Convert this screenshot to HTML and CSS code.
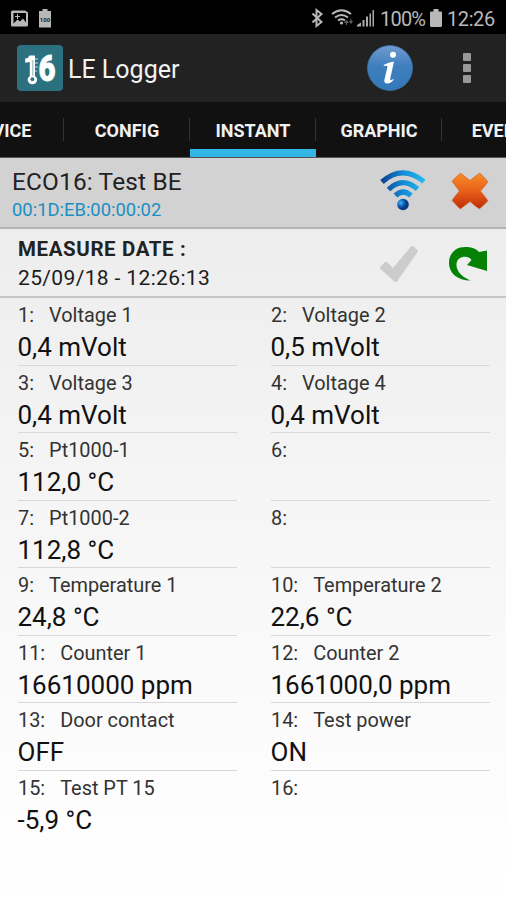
FILE: index.html
```html
<!DOCTYPE html>
<html lang="en">
<head>
<meta charset="utf-8">
<title>LE Logger</title>
<link rel="stylesheet" href="styles.css">
</head>
<body>
<div class="status">
  <svg class="status-left" width="44" height="34" viewBox="0 0 44 34">
    <path fill="#b8b8b8" fill-rule="evenodd" d="M1.500 10.500H14l3 2V25q0 1.500-1.500 1.500H1.500Q0 26.500 0 25V12q0-1.500 1.500-1.500zM2.500 13v10.500l4-4 2.500 2 3-3 3 4V13z"/>
    <path fill="#b8b8b8" d="M4 16h2v-2h1v2h2v1H7v2H6v-2H4zM31.500 9h5v2H40v16.500H28V11h3.500z"/>
    <text class="tiny" x="34" y="21.500" text-anchor="middle">100</text>
  </svg>
  <div class="status-right">
    <svg width="64" height="34" viewBox="0 0 64 34">
      <path fill="none" stroke="#b8b8b8" stroke-width="2" d="M1.500 13.500l9 8.500-5 4V10l5 4-9 8.500"/>
      <g fill="none" stroke="#b8b8b8" stroke-width="2"><path d="M21 14q9.500-7.500 19 0M24 17.500q6.500-5 13 0M27 20.500q3.500-2.500 7 0"/></g>
      <circle cx="30.500" cy="23" r="1.600" fill="#b8b8b8"/>
      <path fill="#666" d="M33 23l2.500-3 2.500 3h-2v2h-1v-2zM38 21h1.500v-2h1v2H42l-2 3z"/>
      <path fill="#aaa" d="M46 26.500v-1.500l4-2.500v4zM51.500 20h2v6.500h-2zM55 16.500h2v10h-2zM58.500 13.500h1.500v13h-1.500zM61.500 10H63v16.500h-1.500z"/>
    </svg>
    <span class="pct">100%</span>
    <svg class="batt" width="12" height="34" viewBox="0 0 12 34"><path fill="#b8b8b8" d="M3.500 9h5v2.500H11q1 0 1 1V25.500q0 1.500-1.500 1.500h-9Q0 27 0 25.500v-13q0-1 1-1h2.500z"/></svg>
    <span class="clock">12:26</span>
  </div>
</div>
<header class="bar">
  <svg class="logo" width="46" height="46" viewBox="0 0 46 46">
    <rect width="46" height="46" rx="4" fill="#2b7180"/>
    <path fill="#fff" d="M12.500 10.500H18v20.500q2.200 1.500 2.200 3.500a4.800 4.800 0 0 1-9.600 0q0-2 2.200-3.500V17l-4.600.8v-4.300q3.500-.5 4.300-3z"/>
    <path fill="none" stroke="#8db6be" stroke-width="1" d="M15.800 15v16"/><circle cx="15.400" cy="34.200" r="1.900" fill="#2b7180"/>
    <path stroke="#cce0e3" stroke-width="1" d="M18 14h3M18 18h3M18 22h3M18 26h2"/>
    <text class="six" x="30" y="36" text-anchor="middle" textLength="17" lengthAdjust="spacingAndGlyphs">6</text>
  </svg>
  <h1>LE Logger</h1>
  <svg class="info" width="46" height="46" viewBox="0 0 46 46">
    <defs><linearGradient id="blue" x2="0" y2="1"><stop stop-color="#729bd0"/><stop offset=".45" stop-color="#3f7fbd"/><stop offset="1" stop-color="#3378ba"/></linearGradient></defs>
    <circle cx="23" cy="23" r="22.500" fill="url(#blue)" stroke="#3975aa" stroke-width=".7"/>
    <circle cx="26" cy="9.800" r="3" fill="#fff"/>
    <path fill="#fff" d="M16.500 20q5-3 10.500-3.500l-3.700 16.700q-.5 2.500 1 1.800l3-1.300q-3 4.800-7 4.800-3.800 0-2.800-4.300l3-12.500q.4-1.700-3.500-.7z"/>
  </svg>
  <div class="more"><i></i><i></i><i></i></div>
</header>
<nav class="tabs">
  <span class="tab">DEVICE</span><span class="tab">CONFIG</span><span class="tab active">INSTANT</span><span class="tab">GRAPHIC</span><span class="tab">EVENTS</span>
</nav>
<section class="device">
  <div class="grow">
    <div class="name">ECO16: Test BE</div>
    <div class="mac">00:1D:EB:00:00:02</div>
  </div>
  <svg class="wifi" width="46" height="42" viewBox="0 0 46 42">
    <defs><linearGradient id="wave" gradientUnits="userSpaceOnUse" x1="1" y1="0" x2="45" y2="0"><stop stop-color="#0b3f91"/><stop offset=".5" stop-color="#138bd5"/><stop offset="1" stop-color="#27bdf3"/></linearGradient>
    <radialGradient id="dot" cx=".3" cy=".35"><stop stop-color="#46b6f1"/><stop offset=".6" stop-color="#0d65b7"/><stop offset="1" stop-color="#093b83"/></radialGradient></defs>
    <g fill="none" stroke="url(#wave)" stroke-width="5.200"><path d="M2 13Q22 -5 44 12.500"/><path d="M8.500 20.500Q22.500 7 37.500 20"/><path d="M15.500 26.500Q23 19.500 31 26.500"/></g>
    <circle cx="23" cy="35.500" r="5.800" fill="url(#dot)"/>
  </svg>
  <svg class="cross" width="38" height="38" viewBox="0 0 38 38">
    <defs><linearGradient id="fire" x2="0" y2="1"><stop stop-color="#f78d25"/><stop offset=".5" stop-color="#e96019"/><stop offset="1" stop-color="#bd2b08"/></linearGradient></defs>
    <path fill="url(#fire)" stroke="#cf6330" stroke-width=".8" stroke-linejoin="round" d="M9.500 1.200l9.500 7.300 9.500-7.300q1 0 8.300 8.300 0 1-7.300 9.500l7.300 9.500q0 1-8.300 8.300-1 0-9.500-7.300l-9.500 7.300q-1 0-8.300-8.300 0-1 7.300-9.500l-7.300-9.500q0-1 8.300-8.300z"/>
  </svg>
</section>
<section class="measure">
  <div class="grow">
    <div class="mtitle">MEASURE DATE :</div>
    <div class="date">25/09/18 - 12:26:13</div>
  </div>
  <svg class="check" width="40" height="38" viewBox="0 0 40 38"><path fill="#ccc" d="M1 22l5-5q1-.5 2 0l6 6L32.500 1q1-.5 2 .5l4 3.500q.8 1 0 2L18 36.500q-1 1.500-2.500 0L1 23.500z"/></svg>
  <svg class="redo" width="40" height="36" viewBox="0 0 40 36"><path fill="#058205" d="M23 34.500C9 34.500 1 27 1 17 1 7 8 1 17 1c7 0 11 1.500 14 5l8-1.500V25l-20-6 4.500-5C20 8.500 9 10 8.500 18c-.5 8 7 14 14.500 16.500z"/></svg>
</section>
<main class="grid">
  <div class="cell"><p>1:<b>Voltage 1</b></p><strong>0,4 mVolt</strong></div>
  <div class="cell"><p>2:<b>Voltage 2</b></p><strong>0,5 mVolt</strong></div>
  <div class="cell"><p>3:<b>Voltage 3</b></p><strong>0,4 mVolt</strong></div>
  <div class="cell"><p>4:<b>Voltage 4</b></p><strong>0,4 mVolt</strong></div>
  <div class="cell"><p>5:<b>Pt1000-1</b></p><strong>112,0 °C</strong></div>
  <div class="cell"><p>6:</p></div>
  <div class="cell"><p>7:<b>Pt1000-2</b></p><strong>112,8 °C</strong></div>
  <div class="cell"><p>8:</p></div>
  <div class="cell"><p>9:<b>Temperature 1</b></p><strong>24,8 °C</strong></div>
  <div class="cell"><p>10:<b>Temperature 2</b></p><strong>22,6 °C</strong></div>
  <div class="cell"><p>11:<b>Counter 1</b></p><strong>16610000 ppm</strong></div>
  <div class="cell"><p>12:<b>Counter 2</b></p><strong>1661000,0 ppm</strong></div>
  <div class="cell"><p>13:<b>Door contact</b></p><strong>OFF</strong></div>
  <div class="cell"><p>14:<b>Test power</b></p><strong>ON</strong></div>
  <div class="cell"><p>15:<b>Test PT 15</b></p><strong>-5,9 °C</strong></div>
  <div class="cell"><p>16:</p></div>
</main>
</body>
</html>
```
FILE: styles.css
```css
* { box-sizing: border-box; margin: 0; padding: 0; }
html { overflow: hidden; }
body {
  width: 506px; height: 900px; overflow: hidden;
  font-family: Roboto, "Liberation Sans", sans-serif; color: #1c1c1c;
  background: linear-gradient(#ededed 230px, #f6f6f6 520px, #fdfdfd 800px, #fff);
}
svg { display: block; flex: none; }
.status { height: 34px; background: #000; display: flex; justify-content: space-between; padding: 0 12px 0 11px; }
.tiny { font: bold 6px Roboto, sans-serif; fill: #222; }
.status-right { display: flex; color: #b8b8b8; font-size: 20px; line-height: 38px; }
.pct { margin-left: 5px; width: 44px; letter-spacing: -0.8px; white-space: nowrap; }
.batt { margin: 0 5px 0 6px; }
.clock { width: 47px; letter-spacing: -0.400px; }
.bar { height: 68px; background: #222; display: flex; align-items: center; padding: 0 35px 0 17px; }
.six { font: 900 36px Roboto, sans-serif; fill: #fff; stroke: #fff; stroke-width: 0.8px; }
h1 { font-size: 25px; font-weight: 400; color: #f2f2f2; margin-left: 5px; flex: 1; line-height: 34px; padding-top: 3px; }
.more { display: flex; flex-direction: column; gap: 3px; margin-left: 50px; }
.more i { width: 8px; height: 8px; background: #999; border-radius: 1px; }
.tabs { height: 56px; background: #111; display: flex; justify-content: center; width: 506px; overflow: hidden; border-bottom: 1px solid #555; }
.tab { width: 126px; height: 55px; flex: none; text-align: center; font-weight: 700; font-size: 18px; line-height: 57px; color: #f0f0f0;
  background: linear-gradient(#333, #333) right 16px / 1px 23px no-repeat; }
.tab.active { border-bottom: 8px solid #33b5e5; }
.device { height: 71px; background: #d2d2d2; border-bottom: 2px solid #b4b4b4; display: flex; padding: 0 17px 0 12px; }
.grow { flex: 1; }
.name { font-size: 24.400px; letter-spacing: 0.170px; line-height: 30px; padding-top: 9px; color: #222; }
.mac { font-size: 18.400px; line-height: 22px; color: #1b8fc2; padding-top: 2px; }
.wifi { margin: 11px 25px 0 0; }
.cross { margin-top: 14px; }
.measure { height: 69px; border-bottom: 2px solid #c6c6c6; display: flex; padding: 0 18px 0 18px; }
.mtitle { font-size: 20.500px; letter-spacing: 0.600px; font-weight: 700; line-height: 26px; padding-top: 7px; color: #222; }
.date { font-size: 21px; letter-spacing: 0.360px; line-height: 26px; padding-top: 3px; }
.check { margin: 16px 29px 0 0; }
.redo { margin-top: 17px; }
.grid { display: grid; grid-template-columns: 219px 219px; column-gap: 34px; grid-auto-rows: 67.500px; padding-left: 18px; }
.cell { border-bottom: 1px solid #d8d8d8; }
.cell:nth-last-child(-n+2) { border-bottom: 0; }
.cell p { font-size: 19.900px; line-height: 24px; padding-top: 6px; color: #333; white-space: nowrap; }
.cell p b { font-weight: 400; margin-left: 15px; }
.cell strong { display: block; font-size: 26px; font-weight: 400; line-height: 30px; padding-top: 4px; margin-left: -0.500px; color: #111; white-space: nowrap; }
```
